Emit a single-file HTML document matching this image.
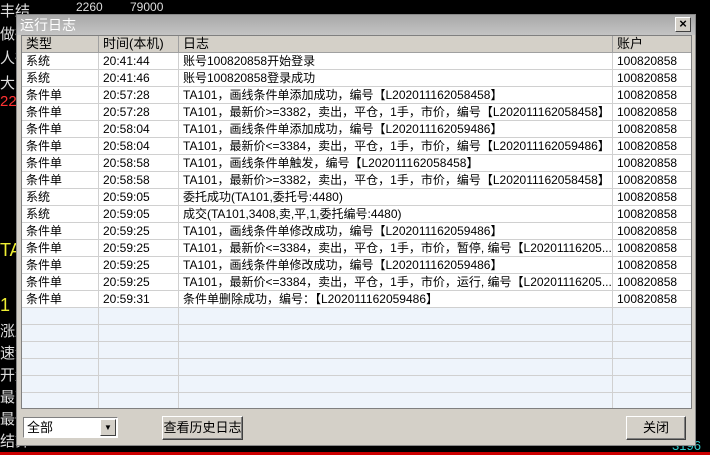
<!DOCTYPE html>
<html><head><meta charset="utf-8"><style>
*{margin:0;padding:0;box-sizing:border-box}
body{width:710px;height:455px;background:#000;position:relative;overflow:hidden;font-family:"Liberation Sans","Noto Sans CJK SC",sans-serif;font-size:12px}
.bg{position:absolute;color:#ddd;font-size:15px}
#dlg{position:absolute;left:16px;top:14px;width:680px;height:432px;background:#d4d0c8;border:1px solid #888}
#title{position:absolute;left:0;top:0;width:678px;height:20px;background:linear-gradient(#a8a8a8,#c4c4c4);color:#fff;font-size:14px;line-height:20px;padding-left:3px}
#x{position:absolute;right:4px;top:2px;width:16px;height:15px;background:#d4d0c8;border:1px solid;border-color:#fff #404040 #404040 #fff;color:#000;font-size:13px;line-height:12px;text-align:center;font-weight:bold}
#tbl{position:absolute;left:4px;top:20px;width:671px;height:374px;background:#eef4fb;border:1px solid #808080;overflow:hidden}
table{border-collapse:separate;border-spacing:0;table-layout:fixed;width:670px}
td,th{height:17px;line-height:16px;border-right:1px solid #d0d0d0;border-bottom:1px solid #d0d0d0;padding:0 0 0 4px;white-space:nowrap;overflow:hidden;font-weight:normal;text-align:left;color:#000}
th{background:#d4d0c8;border-right:1px solid #a0a0a0;border-bottom:1px solid #a0a0a0;font-size:13px}
tr.d td{background:#fff}
.btn{position:absolute;background:#d4d0c8;border:1px solid;border-color:#fff #404040 #404040 #fff;box-shadow:inset -1px -1px #808080;text-align:center;line-height:21px;font-size:13px}
#sel{position:absolute;left:6px;top:402px;width:95px;height:21px;background:#fff;border:1px solid;border-color:#808080 #fff #fff #808080;font-size:13px;line-height:19px;padding-left:3px}
#arr{position:absolute;right:1px;top:1px;width:16px;height:17px;background:#d4d0c8;border:1px solid;border-color:#fff #404040 #404040 #fff;font-size:8px;line-height:15px;text-align:center}
</style></head><body>
<div class="bg" style="left:0;top:0">丰结</div>
<div class="bg" style="left:0;top:23px">做得</div>
<div class="bg" style="left:0;top:47px">人得</div>
<div class="bg" style="left:0;top:72px">大</div>
<div class="bg" style="left:0;top:93px;color:#f33">22</div>
<div class="bg" style="left:0;top:240px;color:#ee3;font-size:18px">TA</div>
<div class="bg" style="left:0;top:295px;color:#ee3;font-size:18px">1</div>
<div class="bg" style="left:0;top:320px">涨跌</div>
<div class="bg" style="left:0;top:342px">速涨</div>
<div class="bg" style="left:0;top:364px">开盘</div>
<div class="bg" style="left:0;top:386px">最高</div>
<div class="bg" style="left:0;top:408px">最低</div>
<div class="bg" style="left:0;top:430px">结算</div>
<div class="bg" style="left:76px;top:0;font-size:12px">2260</div>
<div class="bg" style="left:130px;top:0;font-size:12px">79000</div>
<div class="bg" style="left:672px;top:438px;color:#3cc;font-size:13px">3196</div>
<div style="position:absolute;left:0;top:452px;width:710px;height:3px;background:#c00"></div>
<div id="dlg">
<div id="title">运行日志<div id="x">×</div></div>
<div id="tbl"><table>
<colgroup><col style="width:77px"><col style="width:80px"><col style="width:434px"><col style="width:79px"></colgroup>
<tr><th>类型</th><th>时间(本机)</th><th>日志</th><th>账户</th></tr>
<tr class="d"><td>系统</td><td>20:41:44</td><td>账号100820858开始登录</td><td>100820858</td></tr>
<tr class="d"><td>系统</td><td>20:41:46</td><td>账号100820858登录成功</td><td>100820858</td></tr>
<tr class="d"><td>条件单</td><td>20:57:28</td><td>TA101，画线条件单添加成功，编号【L202011162058458】</td><td>100820858</td></tr>
<tr class="d"><td>条件单</td><td>20:57:28</td><td>TA101，最新价&gt;=3382，卖出，平仓，1手，市价，编号【L202011162058458】</td><td>100820858</td></tr>
<tr class="d"><td>条件单</td><td>20:58:04</td><td>TA101，画线条件单添加成功，编号【L202011162059486】</td><td>100820858</td></tr>
<tr class="d"><td>条件单</td><td>20:58:04</td><td>TA101，最新价&lt;=3384，卖出，平仓，1手，市价，编号【L202011162059486】</td><td>100820858</td></tr>
<tr class="d"><td>条件单</td><td>20:58:58</td><td>TA101，画线条件单触发，编号【L202011162058458】</td><td>100820858</td></tr>
<tr class="d"><td>条件单</td><td>20:58:58</td><td>TA101，最新价&gt;=3382，卖出，平仓，1手，市价，编号【L202011162058458】</td><td>100820858</td></tr>
<tr class="d"><td>系统</td><td>20:59:05</td><td>委托成功(TA101,委托号:4480)</td><td>100820858</td></tr>
<tr class="d"><td>系统</td><td>20:59:05</td><td>成交(TA101,3408,卖,平,1,委托编号:4480)</td><td>100820858</td></tr>
<tr class="d"><td>条件单</td><td>20:59:25</td><td>TA101，画线条件单修改成功，编号【L202011162059486】</td><td>100820858</td></tr>
<tr class="d"><td>条件单</td><td>20:59:25</td><td>TA101，最新价&lt;=3384，卖出，平仓，1手，市价，暂停, 编号【L20201116205...</td><td>100820858</td></tr>
<tr class="d"><td>条件单</td><td>20:59:25</td><td>TA101，画线条件单修改成功，编号【L202011162059486】</td><td>100820858</td></tr>
<tr class="d"><td>条件单</td><td>20:59:25</td><td>TA101，最新价&lt;=3384，卖出，平仓，1手，市价，运行, 编号【L20201116205...</td><td>100820858</td></tr>
<tr class="d"><td>条件单</td><td>20:59:31</td><td>条件单删除成功，编号：【L202011162059486】</td><td>100820858</td></tr>
<tr><td></td><td></td><td></td><td></td></tr>
<tr><td></td><td></td><td></td><td></td></tr>
<tr><td></td><td></td><td></td><td></td></tr>
<tr><td></td><td></td><td></td><td></td></tr>
<tr><td></td><td></td><td></td><td></td></tr>
<tr><td></td><td></td><td></td><td></td></tr>
</table></div>
<div id="sel">全部<div id="arr">▼</div></div>
<div class="btn" style="left:145px;top:401px;width:81px;height:24px">查看历史日志</div>
<div class="btn" style="left:609px;top:401px;width:60px;height:24px">关闭</div>
</div>
</body></html>
